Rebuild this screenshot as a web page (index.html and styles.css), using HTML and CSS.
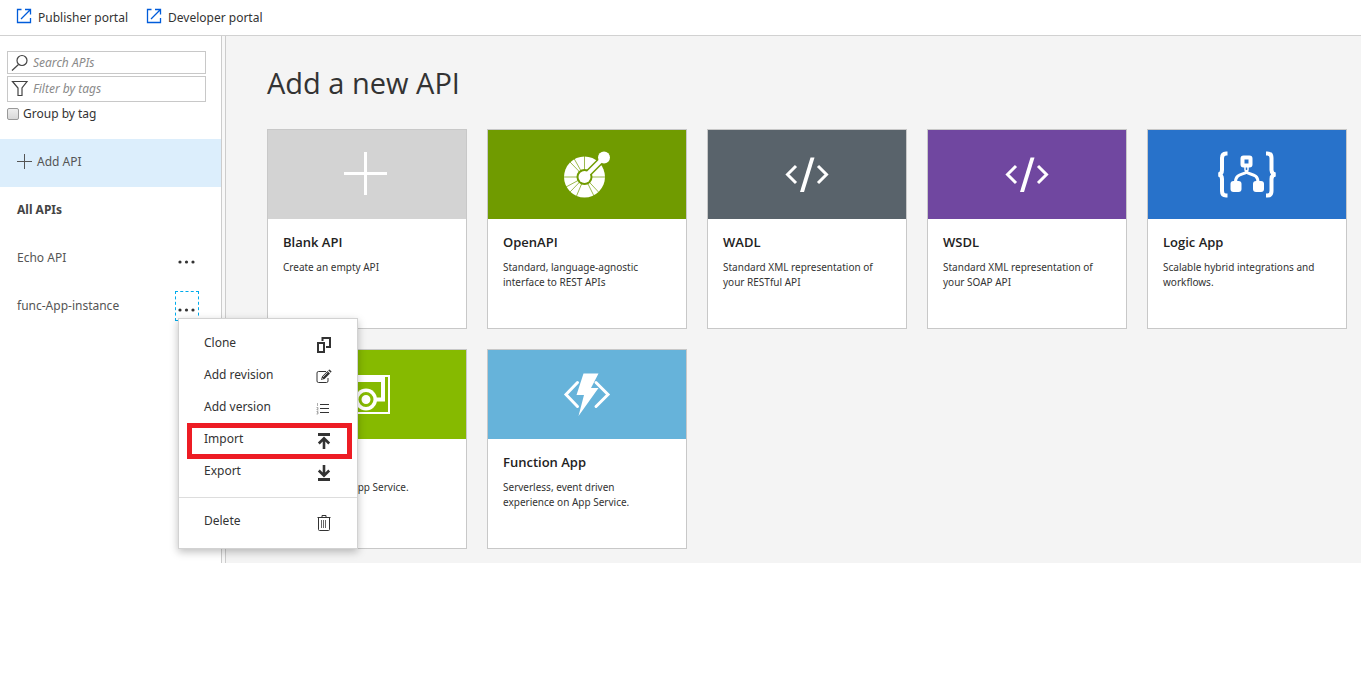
FILE: index.html
```html
<!DOCTYPE html>
<html lang="en">
<head>
<meta charset="utf-8">
<title>APIs</title>
<link rel="stylesheet" href="styles.css">
</head>
<body>
<header class="topbar">
  <a class="portal-link" href="#publisher">
    <svg class="ext-icon" width="16" height="16" viewBox="0 0 16 16" aria-hidden="true"><path d="M5.500 1.500H1.500V14.500H14.500V10M9 1.500H14.500V6.500M14.500 1.500L5 11"/></svg>
    Publisher portal</a>
  <a class="portal-link" href="#developer">
    <svg class="ext-icon" width="16" height="16" viewBox="0 0 16 16" aria-hidden="true"><path d="M5.500 1.500H1.500V14.500H14.500V10M9 1.500H14.500V6.500M14.500 1.500L5 11"/></svg>
    Developer portal</a>
</header>
<div class="workspace">
  <aside class="sidebar">
    <div class="filters">
      <label class="field">
        <svg class="field-icon" width="18" height="18" viewBox="0 0 18 18" aria-hidden="true"><circle cx="11" cy="6.500" r="5"/><path d="M7.500 10.500L1 16.500"/></svg>
        <input class="field-input" type="text" placeholder="Search APIs" aria-label="Search APIs">
      </label>
      <label class="field field-tall">
        <svg class="field-icon" width="18" height="18" viewBox="0 0 18 18" aria-hidden="true"><path d="M1.500 1.500H16L11 8V15.500H7V8Z"/></svg>
        <input class="field-input" type="text" placeholder="Filter by tags" aria-label="Filter by tags">
      </label>
      <label class="group-toggle"><input class="group-box" type="checkbox">Group by tag</label>
    </div>
    <nav class="api-list">
      <button class="api-row add-row" type="button">
        <svg class="add-icon" width="16" height="16" viewBox="0 0 16 16" aria-hidden="true"><path d="M7.500 0V15M0 7.500H15"/></svg>Add API</button>
      <div class="api-row"><a class="api-name all" href="#all">All APIs</a></div>
      <div class="api-row"><a class="api-name" href="#echo">Echo API</a>
        <button class="more" type="button" aria-label="Echo API actions"><svg width="18" height="4" viewBox="0 0 18 4"><circle cx="2" cy="2" r="1.600"/><circle cx="8.500" cy="2" r="1.600"/><circle cx="15" cy="2" r="1.600"/></svg></button></div>
      <div class="api-row"><a class="api-name" href="#func">func-App-instance</a>
        <button class="more focused" type="button" aria-label="func-App-instance actions"><svg width="18" height="4" viewBox="0 0 18 4"><circle cx="2" cy="2" r="1.600"/><circle cx="8.500" cy="2" r="1.600"/><circle cx="15" cy="2" r="1.600"/></svg></button>
        <div class="menu" role="menu">
          <button class="menu-item" type="button" role="menuitem">Clone
            <svg width="16" height="16" viewBox="0 0 16 16" aria-hidden="true"><path class="s2" d="M2 6H8V15H2ZM6.500 4V1H14V10H10"/></svg></button>
          <button class="menu-item" type="button" role="menuitem">Add revision
            <svg width="16" height="16" viewBox="0 0 16 16" aria-hidden="true"><path class="s1" d="M10 2.500H2.500Q1 2.500 1 4V12Q1 13.500 2.500 13.500H10.500Q12 13.500 12 12V9"/><path class="solid" d="M5 11L6 7.500L11.500 2L14 4.500L8.500 10ZM12.200 1.300L13.500 0.500L15.600 2.600L14.700 3.800Z"/><path class="cut" d="M7 8L11.500 3.500M6 9.500L7 10"/></svg></button>
          <button class="menu-item" type="button" role="menuitem">Add version
            <svg width="16" height="16" viewBox="0 0 16 16" aria-hidden="true"><path class="s1" d="M4 3.500H13M4 7.500H13M4 11.500H13"/><path class="thin" d="M1.500 2V5M0.500 6.500H2V8H1V9H2.500M0.500 10.500H2V13H0.500M1 11.700H2"/></svg></button>
          <button class="menu-item marked" type="button" role="menuitem">Import
            <svg width="16" height="16" viewBox="0 0 16 16" aria-hidden="true"><path class="solid" d="M2 0H14V3H2Z"/><path class="arrow" d="M8 16V5.500M2.800 10.500L8 5.300L13.200 10.500"/></svg></button>
          <button class="menu-item" type="button" role="menuitem">Export
            <svg width="16" height="16" viewBox="0 0 16 16" aria-hidden="true"><path class="solid" d="M2 13H14V16H2Z"/><path class="arrow" d="M8 0V10.500M2.800 5.500L8 10.700L13.200 5.500"/></svg></button>
          <hr class="menu-rule">
          <button class="menu-item" type="button" role="menuitem">Delete
            <svg width="16" height="16" viewBox="0 0 16 16" aria-hidden="true"><path class="s1" d="M1.500 2.500H14.500M6 2.500V0.500H10V2.500M2.500 2.500V14.500Q2.500 15.500 3.500 15.500H12.500Q13.500 15.500 13.500 14.500V2.500"/><path class="bars" d="M5.500 5V13M7.500 5V13M9.500 5V13"/></svg></button>
        </div>
      </div>
    </nav>
  </aside>
  <div class="splitter"></div>
  <main class="content">
    <h1 class="title">Add a new API</h1>
    <div class="cards">
      <button class="card" type="button">
        <span class="art blank"><svg width="60" height="60" viewBox="0 0 60 60" aria-hidden="true"><path class="w3" d="M28.500 8V51M7 29.500H50"/></svg></span>
        <span class="card-text"><span class="card-title">Blank API</span><span class="card-desc">Create an empty API</span></span>
      </button>
      <button class="card" type="button">
        <span class="art openapi"><svg width="60" height="60" viewBox="0 0 60 60" aria-hidden="true"><circle class="fw" cx="27.500" cy="33" r="20.500"/><path class="seg" d="M27.500 33V12M27.500 33H49M27.500 33H7M27.500 33L13 18M27.500 33L17 14.500M27.500 33L9 43M27.500 33L13 48M27.500 33L19.500 52M27.500 33L37 52M27.500 33L41.500 48"/><path class="gap" d="M27.500 33L47 13.500"/><circle class="hub" cx="27.500" cy="33" r="8"/><path class="arm" d="M27.500 33L47 13.500"/><circle class="fw" cx="27.500" cy="33" r="6"/><circle class="fw" cx="47" cy="13.500" r="6"/></svg></span>
        <span class="card-text"><span class="card-title">OpenAPI</span><span class="card-desc">Standard, language-agnostic interface to REST APIs</span></span>
      </button>
      <button class="card" type="button">
        <span class="art wadl"><svg width="60" height="60" viewBox="0 0 60 60" aria-hidden="true"><path class="w3" d="M19 22L10.500 30.500L19 39M41 22L49.500 30.500L41 39"/><path class="fw" d="M33.500 13.500H37.500L27 48H23Z"/></svg></span>
        <span class="card-text"><span class="card-title">WADL</span><span class="card-desc">Standard XML representation of your RESTful API</span></span>
      </button>
      <button class="card" type="button">
        <span class="art wsdl"><svg width="60" height="60" viewBox="0 0 60 60" aria-hidden="true"><path class="w3" d="M19 22L10.500 30.500L19 39M41 22L49.500 30.500L41 39"/><path class="fw" d="M33.500 13.500H37.500L27 48H23Z"/></svg></span>
        <span class="card-text"><span class="card-title">WSDL</span><span class="card-desc">Standard XML representation of your SOAP API</span></span>
      </button>
      <button class="card" type="button">
        <span class="art logic"><svg width="60" height="60" viewBox="0 0 60 60" aria-hidden="true"><path class="brace" d="M10.500 9.500H9Q5 9.500 5 14V26Q5 30 1.500 30.500Q5 31 5 35V47Q5 51.500 9 51.500H10.500M49 9.500H50.500Q54.500 9.500 54.500 14V26Q54.500 30 58.500 30.500Q54.500 31 54.500 35V47Q54.500 51.500 50.500 51.500H49"/><rect class="node" x="25.500" y="13.500" width="8" height="8" rx="1"/><rect class="fw" x="13.500" y="37" width="11" height="11" rx="3"/><rect class="fw" x="36" y="37" width="11" height="11" rx="3"/><path class="w3" d="M18.500 38C18.500 29 27 31 29.500 28C32 31 41 29 41 38"/><path class="wthin" d="M28 23V26L29.500 28L31 26V23"/></svg></span>
        <span class="card-text"><span class="card-title">Logic App</span><span class="card-desc">Scalable hybrid integrations and workflows.</span></span>
      </button>
      <button class="card" type="button">
        <span class="art apiapp"><svg width="60" height="60" viewBox="0 0 60 60" aria-hidden="true"><path class="frame" d="M7 12H52V49H7Z"/><path class="fw" d="M7 12H48V18H7Z"/><circle class="fw" cx="29" cy="35.500" r="11"/><path class="arm" d="M29 35.500H46V16"/><circle class="dial" cx="29" cy="35.500" r="6"/></svg></span>
        <span class="card-text"><span class="card-title">API App</span><span class="card-desc">API hosted on App Service.</span></span>
      </button>
      <button class="card" type="button">
        <span class="art function"><svg width="60" height="60" viewBox="0 0 60 60" aria-hidden="true"><path class="chev" d="M20.500 18.500L9 30.500L20.500 42.500M39 18.500L51 30.500L39 42.500"/><path class="fw" d="M26.500 9.500H41.500L34 24H41.500L21.500 52L27 31H19.500Z"/></svg></span>
        <span class="card-text"><span class="card-title">Function App</span><span class="card-desc">Serverless, event driven<br>experience on App Service.</span></span>
      </button>
    </div>
  </main>
</div>
</body>
</html>
```
FILE: styles.css
```css
* { box-sizing: border-box; }
body {
  margin: 0;
  background: #fff;
  color: #333;
  font: 12px/16px "Noto Sans", "Open Sans", sans-serif;
}
button { font: inherit; color: inherit; border: 0; padding: 0; background: none; text-align: left; }
a { color: inherit; text-decoration: none; }
svg { flex: none; fill: none; }

.topbar {
  display: flex;
  gap: 18px;
  height: 36px;
  padding: 1px 16px 0;
  border-bottom: 1px solid #d1d1d1;
}
.portal-link { display: flex; align-items: center; gap: 6px; }
.ext-icon { stroke: #015cda; stroke-width: 1.300; margin-bottom: 4px; }

.workspace { display: flex; }
.sidebar { flex: none; width: 222px; border-right: 1px solid #ccc; }
.splitter { flex: none; width: 4px; border-right: 1px solid #ccc; background: #f8f8f8; }

.filters { display: flex; flex-direction: column; gap: 2px; padding: 15px 15px 16px 7px; }
.field {
  display: flex;
  align-items: center;
  gap: 4px;
  height: 23px;
  padding: 0 3px;
  border: 1px solid #c8c8c8;
}
.field-tall { height: 26px; }
.field-icon { stroke: #444; stroke-width: 1.200; }
.field-input {
  flex: 1;
  min-width: 0;
  border: 0;
  padding: 0;
  outline: 0;
  background: none;
  font: inherit;
}
.field-input::placeholder { color: #8a8a8a; font-style: italic; opacity: 1; }
.group-toggle { display: flex; align-items: center; gap: 4px; height: 19px; }
.group-box {
  appearance: none;
  width: 12px;
  height: 12px;
  margin: 0;
  border: 1px solid #999;
  border-radius: 2px;
  background: linear-gradient(#eee, #d8d8d8);
}

.api-row {
  position: relative;
  display: flex;
  align-items: center;
  justify-content: space-between;
  width: 100%;
  height: 48px;
  padding: 0 22px 2px 17px;
  color: #555;
}
.add-row { justify-content: flex-start; gap: 4px; background: #dceefc; }
.add-icon { stroke: #555; stroke-width: 1; }
.all { font-weight: 700; color: #444; }
.more {
  display: flex;
  align-items: flex-end;
  justify-content: center;
  width: 24px;
  height: 30px;
  padding-bottom: 8px;
  border: 1px solid transparent;
}
.more svg { fill: #333; }
.focused { border: 1px dashed #00abec; }

.menu {
  position: absolute;
  z-index: 2;
  top: 35px;
  left: 178px;
  width: 180px;
  padding: 8px 0 11px;
  border: 1px solid #d2d2d2;
  background: #fff;
  color: #333;
  box-shadow: 0 3px 8px rgba(0, 0, 0, .25);
}
.menu-item {
  position: relative;
  display: flex;
  align-items: center;
  justify-content: space-between;
  width: 100%;
  height: 32px;
  padding: 0 25px;
}
.menu-item svg { margin-top: 4px; }
.marked::after {
  content: "";
  position: absolute;
  inset: 0 5px -4px 8px;
  border: 5px solid #ed1c24;
}
.menu-rule { height: 1px; margin: 10px 0 7px; border: 0; background: #ddd; }
.s1 { stroke: #333; stroke-width: 1; }
.s2 { stroke: #333; stroke-width: 2; }
.arrow { stroke: #333; stroke-width: 2.600; }
.bars { stroke: #666; stroke-width: 1; }
.thin { stroke: #777; stroke-width: 0.600; }
.cut { stroke: #fff; stroke-width: 0.700; }
.solid { fill: #333; }

.content { flex: 1; min-width: 0; padding: 27px 14px 14px 41px; background: #f4f4f4; }
.title {
  margin: 0 0 26px;
  font-family: "Open Sans", "Noto Sans", sans-serif;
  font-size: 29px;
  line-height: 40px;
  font-weight: 400;
}
.cards { display: grid; grid-template-columns: repeat(auto-fill, 200px); gap: 20px; }
.card {
  display: flex;
  flex-direction: column;
  min-height: 200px;
  border: 1px solid #c8c8c8;
  background: #fff;
}
.art { display: flex; justify-content: center; width: 100%; height: 89px; padding-top: 14px; }
.blank { background: #d3d3d3; }
.openapi { background: #709b00; }
.wadl { background: #59636b; }
.wsdl { background: #7047a0; }
.logic { background: #2872ca; }
.apiapp { background: #86ba00; }
.function { background: #66b3da; }
.card-text { display: flex; flex-direction: column; gap: 8px; padding: 13px 15px; }
.card-title {
  font-family: "Open Sans", "Noto Sans", sans-serif;
  font-size: 13px;
  line-height: 20px;
  font-weight: 600;
  color: #222;
}
.card-desc { font-size: 10px; line-height: 15px; }
.fw { fill: #fff; }
.w3 { stroke: #fff; stroke-width: 3; }
.wthin { stroke: #fff; stroke-width: 1.500; }
.node { stroke: #fff; stroke-width: 4; }
.chev { stroke: #fff; stroke-width: 3; stroke-linecap: round; }
.brace { stroke: #fff; stroke-width: 4; }
.seg { stroke: #709b00; stroke-width: 0.700; }
.gap { stroke: #709b00; stroke-width: 7; }
.arm { stroke: #fff; stroke-width: 4; }
.hub { fill: #709b00; }
.frame { stroke: #fff; stroke-width: 2; }
.dial { fill: #fff; stroke: #86ba00; stroke-width: 3; }
```
